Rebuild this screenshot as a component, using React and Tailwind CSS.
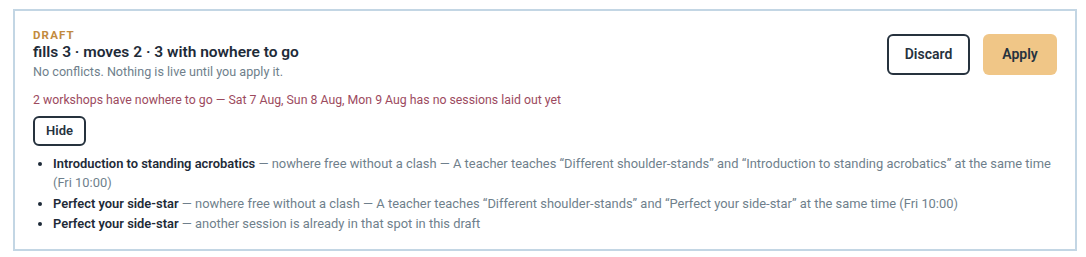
export default function App() {
  const font = { fontFamily: "Roboto, 'Noto Sans', sans-serif" };
  return (
    <div className="bg-white pl-[13px] pr-[9px] pt-[9px] pb-[7px]" style={font}>
      <div className="border-2 border-[#c3d6e4] px-[18px] pt-[17px] pb-[16px]">
        <div className="flex items-center justify-between">
          <div>
            <div className="text-[11.5px] leading-[14px] font-bold tracking-[0.1em] text-[#c28a3e]">DRAFT</div>
            <div className="text-[15.5px] leading-[20px] font-semibold text-[#1e2b38]">fills 3 · moves 2 · 3 with nowhere to go</div>
            <div className="mt-[1px] text-[12.6px] leading-[18px] text-[#6f7f8c]">No conflicts. Nothing is live until you apply it.</div>
          </div>
          <div className="flex gap-[13px]">
            <button className="h-[41px] w-[83px] rounded-[6px] border-2 border-[#26323e] text-[14px] font-semibold text-[#26323e]">Discard</button>
            <button className="h-[41px] w-[74px] rounded-[6px] bg-[#f0c687] text-[14px] font-semibold text-[#26323e]">Apply</button>
          </div>
        </div>
        <div className="mt-[10px] text-[12.3px] leading-[18px] text-[#9c4a5e]">
          2 workshops have nowhere to go — Sat 7 Aug, Sun 8 Aug, Mon 9 Aug has no sessions laid out yet
        </div>
        <button className="mt-[7px] h-[30px] w-[53px] rounded-[6px] border-2 border-[#26323e] text-[13px] font-semibold text-[#26323e]">Hide</button>
        <ul className="mt-[8px] list-disc pl-5 text-[12.9px] leading-[19px] text-[#6f7f8c] space-y-[1.5px]">
          <li className="marker:text-[#1e2b38]">
            <span className="font-semibold text-[#1e2b38]">Introduction to standing acrobatics</span> — nowhere free without a clash — A teacher teaches “Different shoulder-stands” and “Introduction to standing acrobatics” at the same time (Fri 10:00)
          </li>
          <li className="marker:text-[#1e2b38]">
            <span className="font-semibold text-[#1e2b38]">Perfect your side-star</span> — nowhere free without a clash — A teacher teaches “Different shoulder-stands” and “Perfect your side-star” at the same time (Fri 10:00)
          </li>
          <li className="marker:text-[#1e2b38]">
            <span className="font-semibold text-[#1e2b38]">Perfect your side-star</span> — another session is already in that spot in this draft
          </li>
        </ul>
      </div>
    </div>
  );
}
